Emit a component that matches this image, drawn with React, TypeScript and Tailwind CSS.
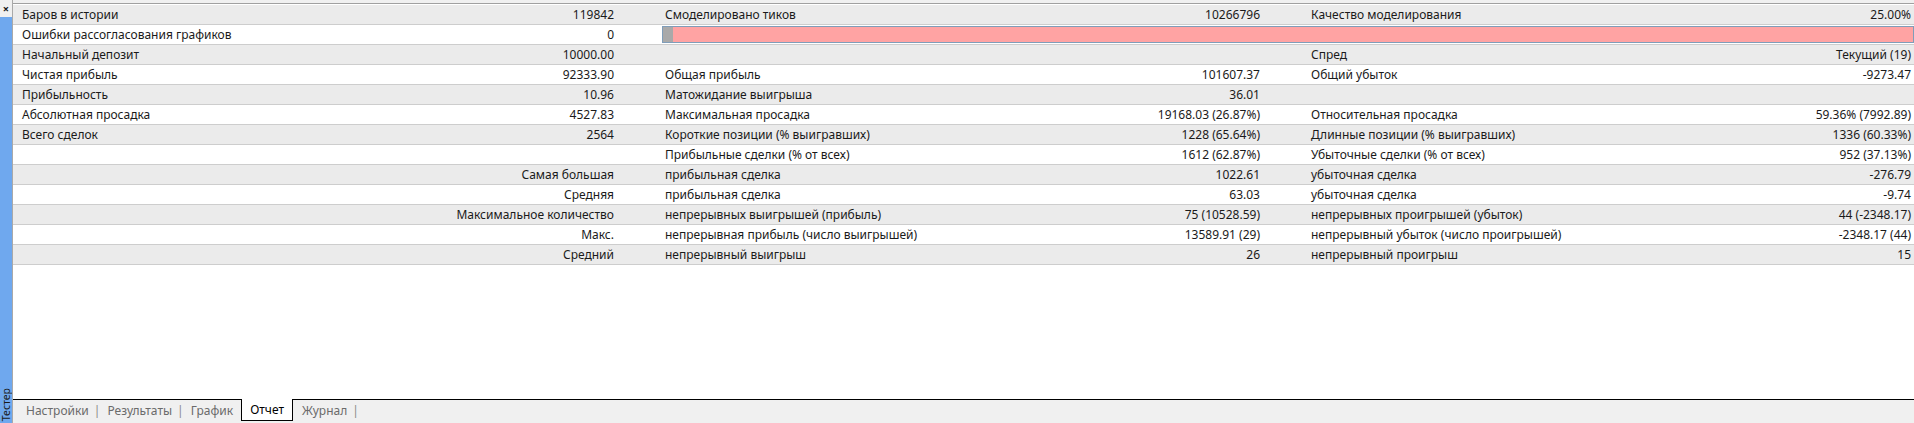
const rows: { a?: [string, string]; aRight?: string; b?: [string, string]; c?: [string, string]; bar?: boolean }[] = [
  { a: ['Баров в истории', '119842'], b: ['Смоделировано тиков', '10266796'], c: ['Качество моделирования', '25.00%'] },
  { a: ['Ошибки рассогласования графиков', '0'], bar: true },
  { a: ['Начальный депозит', '10000.00'], c: ['Спред', 'Текущий (19)'] },
  { a: ['Чистая прибыль', '92333.90'], b: ['Общая прибыль', '101607.37'], c: ['Общий убыток', '-9273.47'] },
  { a: ['Прибыльность', '10.96'], b: ['Матожидание выигрыша', '36.01'] },
  { a: ['Абсолютная просадка', '4527.83'], b: ['Максимальная просадка', '19168.03 (26.87%)'], c: ['Относительная просадка', '59.36% (7992.89)'] },
  { a: ['Всего сделок', '2564'], b: ['Короткие позиции (% выигравших)', '1228 (65.64%)'], c: ['Длинные позиции (% выигравших)', '1336 (60.33%)'] },
  { b: ['Прибыльные сделки (% от всех)', '1612 (62.87%)'], c: ['Убыточные сделки (% от всех)', '952 (37.13%)'] },
  { aRight: 'Самая большая', b: ['прибыльная сделка', '1022.61'], c: ['убыточная сделка', '-276.79'] },
  { aRight: 'Средняя', b: ['прибыльная сделка', '63.03'], c: ['убыточная сделка', '-9.74'] },
  { aRight: 'Максимальное количество', b: ['непрерывных выигрышей (прибыль)', '75 (10528.59)'], c: ['непрерывных проигрышей (убыток)', '44 (-2348.17)'] },
  { aRight: 'Макс.', b: ['непрерывная прибыль (число выигрышей)', '13589.91 (29)'], c: ['непрерывный убыток (число проигрышей)', '-2348.17 (44)'] },
  { aRight: 'Средний', b: ['непрерывный выигрыш', '26'], c: ['непрерывный проигрыш', '15'] },
];

const Pair = ({ p, className }: { p?: [string, string]; className: string }) => (
  <div className={`flex justify-between whitespace-nowrap ${className}`}>
    <span>{p ? p[0] : ''}</span>
    <span>{p ? p[1] : ''}</span>
  </div>
);

const Sep = () => <span className="ml-[5px] mr-[7px] text-[#8a8a8a]">|</span>;

export default function App() {
  return (
    <div className="flex h-[423px] w-[1914px] overflow-hidden bg-white font-['Segoe_UI','Noto_Sans',sans-serif] text-[12px] text-[#1a1a1a]">
      <div className="flex w-[12px] flex-col">
        <div className="flex h-[17px] items-start justify-center bg-[#f0f0f0] text-[11px] font-bold leading-[18px]">×</div>
        <div className="flex flex-1 items-end justify-center overflow-hidden bg-[#6fa8ee] pb-[2px]">
          <span className="w-[12px] rotate-180 text-center text-[10.5px] leading-[12px] text-[#1a1a1a] [writing-mode:vertical-rl]">
            Тестер
          </span>
        </div>
      </div>

      <div className="flex flex-1 flex-col border-l border-[#a9a9a9]">
        <div className="h-[3px] bg-[#f0f0f0]" />
        <div className="h-px bg-[#a0a0a0]" />
        <div className="h-px bg-white" />
        {rows.map((r, i) => (
          <div
            key={i}
            className={`flex h-[20px] items-center gap-[51px] border-b border-[#cdcdcd] pl-[9px] leading-[19px] ${i % 2 === 0 ? 'bg-[#ebebeb]' : 'bg-white'}`}
          >
            {r.aRight ? (
              <div className="w-[592px] text-right whitespace-nowrap">{r.aRight}</div>
            ) : (
              <Pair p={r.a} className="w-[592px]" />
            )}
            {r.bar ? (
              <div className="-ml-[3px] flex h-[17px] flex-1 border border-[#7f9db9] bg-[#ffa3a3]">
                <div className="w-[10px] bg-[#a9a9a9]" />
              </div>
            ) : (
              <>
                <Pair p={r.b} className="w-[595px]" />
                <Pair p={r.c} className="flex-1 pr-[3px]" />
              </>
            )}
          </div>
        ))}
        <div className="flex-1" />
        <div className="flex h-[24px] items-start border-t border-black bg-[#f0f0f0] pl-[13px] text-[12px] text-[#6b6b6b]">
          <div className="flex h-[21px] items-center">
            <span>Настройки</span>
            <Sep />
            <span>Результаты</span>
            <Sep />
            <span>График</span>
          </div>
          <div className="-mt-px ml-[8px] flex h-[22px] items-center border-x border-b border-black bg-white px-[8px] text-black">
            Отчет
          </div>
          <div className="ml-[9px] flex h-[21px] items-center">
            <span>Журнал</span>
            <Sep />
          </div>
        </div>
      </div>
    </div>
  );
}
